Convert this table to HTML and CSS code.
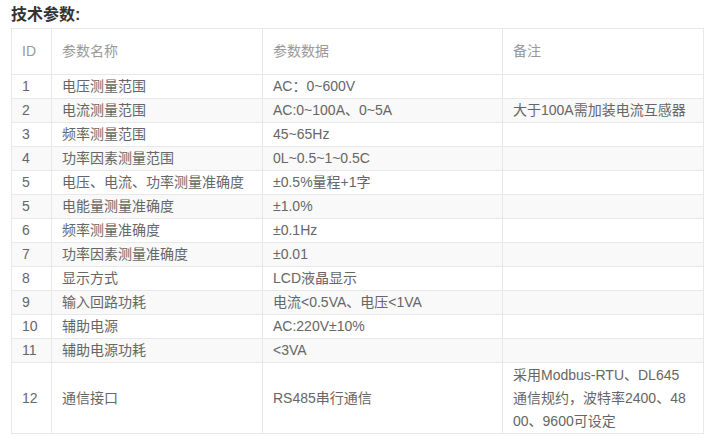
FILE: index.html
```html
<!DOCTYPE html>
<html lang="zh-CN">
<head>
<meta charset="utf-8">
<title>技术参数</title>
<link rel="stylesheet" href="styles.css">
</head>
<body>
<div class="page">
  <h3 class="title">技术参数:</h3>
  <table class="params">
    <colgroup>
      <col class="c-id">
      <col class="c-name">
      <col class="c-data">
      <col class="c-note">
    </colgroup>
    <thead>
      <tr><th>ID</th><th>参数名称</th><th>参数数据</th><th>备注</th></tr>
    </thead>
    <tbody>
      <tr><td>1</td><td>电压测量范围</td><td>AC：0~600V</td><td></td></tr>
      <tr><td>2</td><td>电流测量范围</td><td>AC:0~100A、0~5A</td><td>大于100A需加装电流互感器</td></tr>
      <tr><td>3</td><td>频率测量范围</td><td>45~65Hz</td><td></td></tr>
      <tr><td>4</td><td>功率因素测量范围</td><td>0L~0.5~1~0.5C</td><td></td></tr>
      <tr><td>5</td><td>电压、电流、功率测量准确度</td><td>±0.5%量程+1字</td><td></td></tr>
      <tr><td>5</td><td>电能量测量准确度</td><td>±1.0%</td><td></td></tr>
      <tr><td>6</td><td>频率测量准确度</td><td>±0.1Hz</td><td></td></tr>
      <tr><td>7</td><td>功率因素测量准确度</td><td>±0.01</td><td></td></tr>
      <tr><td>8</td><td>显示方式</td><td>LCD液晶显示</td><td></td></tr>
      <tr><td>9</td><td>输入回路功耗</td><td>电流&lt;0.5VA、电压&lt;1VA</td><td></td></tr>
      <tr><td>10</td><td>辅助电源</td><td>AC:220V±10%</td><td></td></tr>
      <tr><td>11</td><td>辅助电源功耗</td><td>&lt;3VA</td><td></td></tr>
      <tr><td>12</td><td>通信接口</td><td>RS485串行通信</td><td class="wrap">采用Modbus-RTU、DL645通信规约，波特率2400、4800、9600可设定</td></tr>
    </tbody>
  </table>
</div>
</body>
</html>
```

FILE: styles.css
```css
html, body {
  margin: 0;
  padding: 0;
  background: #fff;
}

.page {
  padding: 5px 7px 0 11px;
  font-family: "Liberation Sans", "Noto Sans CJK SC", "Noto Sans CJK JP", sans-serif;
}

.title {
  margin: 0 0 3px 0;
  font-size: 16px;
  line-height: 20px;
  font-weight: bold;
  color: #333;
}

.params {
  border-collapse: collapse;
  table-layout: fixed;
  width: 692px;
  font-size: 14px;
  color: #666;
}

.c-id { width: 40px; }
.c-name { width: 211px; }
.c-data { width: 240px; }
.c-note { width: 201px; }

.params th,
.params td {
  border: 1px solid #e8e8e8;
  padding: 0 10px;
  line-height: 23px;
  text-align: left;
  vertical-align: middle;
}

.params th {
  font-weight: normal;
  color: #999;
  height: 45px;
}

.params tbody tr:nth-child(even) td {
  background: #f9f9f9;
}

.params td.wrap {
  word-break: break-all;
  padding-top: 1px;
  padding-bottom: 0;
}
```
